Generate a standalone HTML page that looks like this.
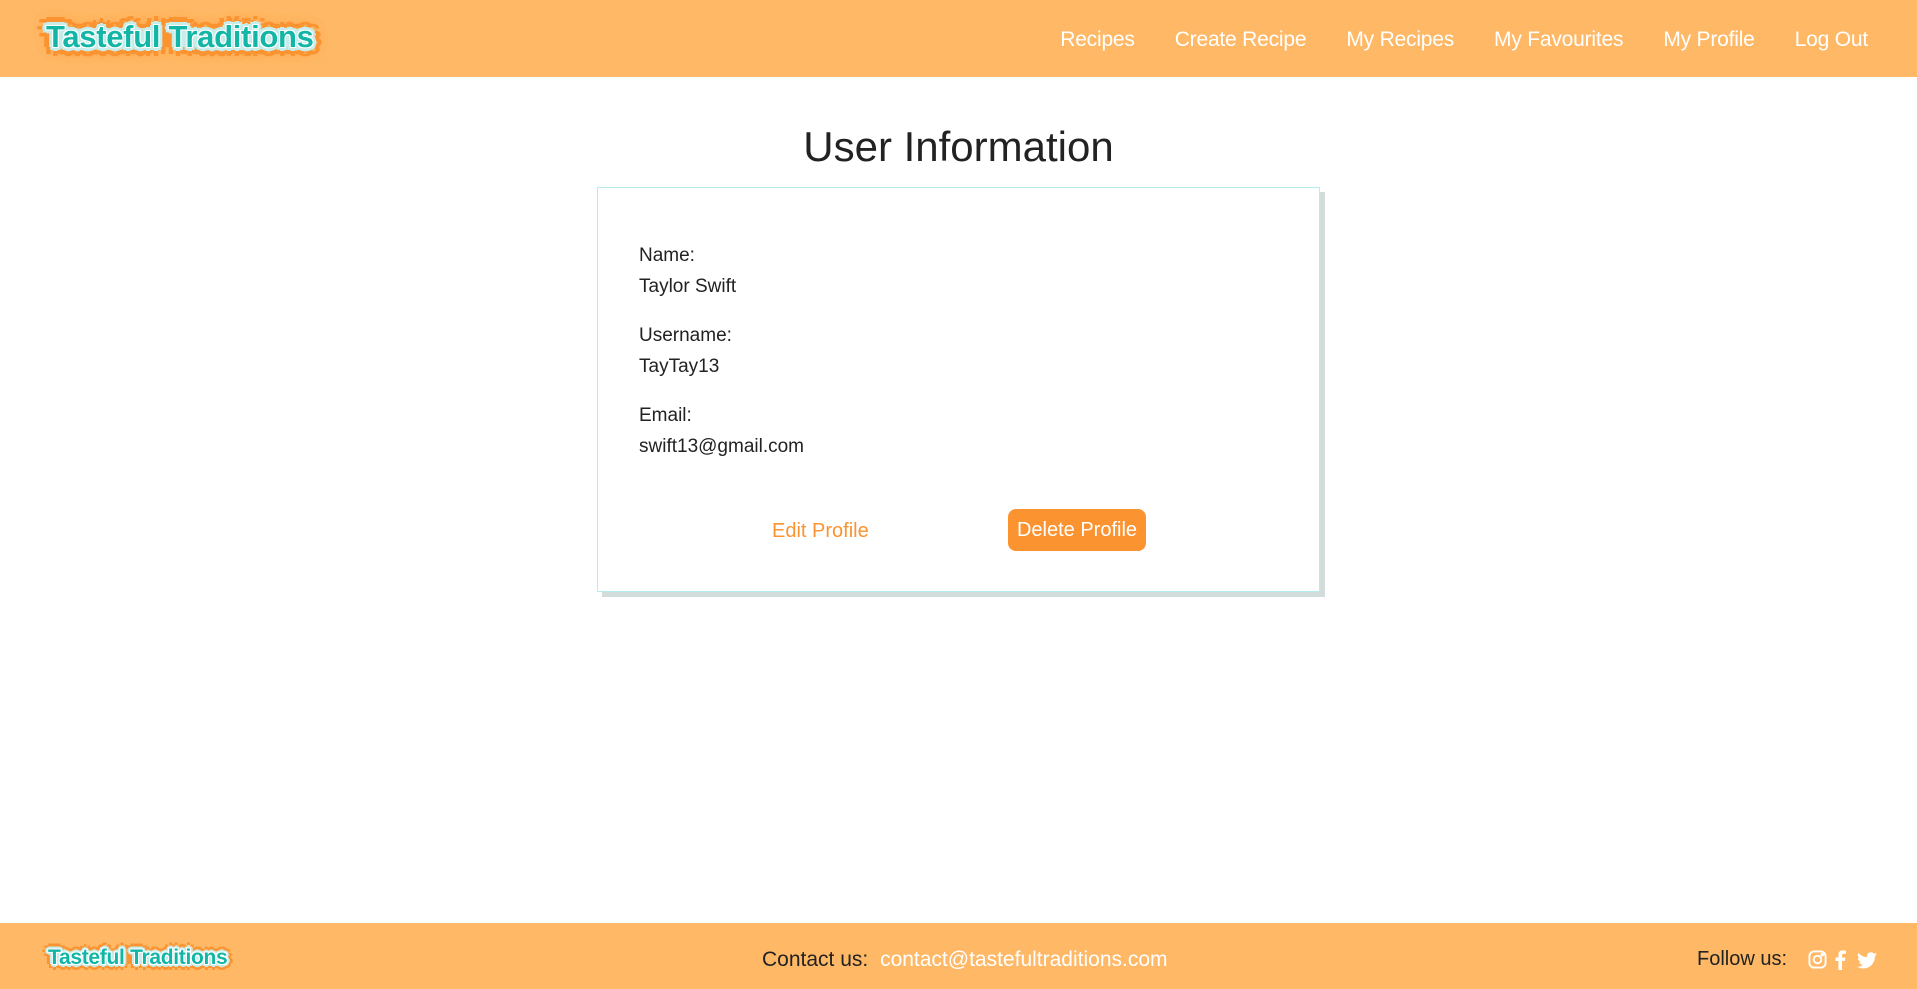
<!DOCTYPE html>
<html><head><meta charset="utf-8"><style>
*{margin:0;padding:0;box-sizing:border-box}
body{width:1917px;height:989px;position:relative;background:#fff;font-family:"Liberation Sans",sans-serif;color:#222;overflow:hidden}
header{position:absolute;left:0;top:0;width:1917px;height:77px;background:#ffb866}
.logo{position:absolute;font-weight:bold;color:#13b6a6;white-space:nowrap}
.logo.big{left:46px;top:19px;font-size:31px;letter-spacing:-0.3px;
text-shadow:1px 1px 0 #fff,-1px -1px 0 #fff,1px -1px 0 #fff,-1px 1px 0 #fff,
4px 0 0 #c8ecea,-4px 0 0 #c8ecea,0 4px 0 #c8ecea,0 -4px 0 #c8ecea,3px 3px 0 #c8ecea,-3px -3px 0 #c8ecea,3px -3px 0 #c8ecea,-3px 3px 0 #c8ecea,
9px 0 0 #fb9330,-9px 0 0 #fb9330,0 9px 0 #fb9330,0 -9px 0 #fb9330,7px 7px 0 #fb9330,-7px -7px 0 #fb9330,7px -7px 0 #fb9330,-7px 7px 0 #fb9330,0 0 16px #fb9330,0 0 16px #fb9330}
.logo.small{left:48px;top:946px;font-size:21px;letter-spacing:-0.3px;
text-shadow:1px 1px 0 #fff,-1px -1px 0 #fff,1px -1px 0 #fff,-1px 1px 0 #fff,
3px 0 0 #c8ecea,-3px 0 0 #c8ecea,0 3px 0 #c8ecea,0 -3px 0 #c8ecea,2px 2px 0 #c8ecea,-2px -2px 0 #c8ecea,2px -2px 0 #c8ecea,-2px 2px 0 #c8ecea,
6px 0 0 #fb9330,-6px 0 0 #fb9330,0 6px 0 #fb9330,0 -6px 0 #fb9330,4px 4px 0 #fb9330,-4px -4px 0 #fb9330,4px -4px 0 #fb9330,-4px 4px 0 #fb9330}
nav{position:absolute;right:49px;top:28px;display:flex;gap:40px;font-size:21px;color:#fff;letter-spacing:-0.2px}
h1{position:absolute;top:123px;width:1917px;text-align:center;font-weight:normal;font-size:42px;color:#222}
.card{position:absolute;left:597px;top:187px;width:723px;height:405px;border:1.5px solid #b5ecec;background:#fff;box-shadow:5px 5px 0 #d2dcdb}
.f{position:absolute;left:41px;font-size:19px;line-height:31px}
.edit{position:absolute;left:174px;top:332px;font-size:20px;color:#fb9330}
.del{position:absolute;left:410px;top:321px;width:138px;height:42px;background:#fb9330;border-radius:8px;color:#fff;font-size:20px;text-align:center;line-height:42px}
footer{position:absolute;left:0;top:923px;width:1917px;height:66px;background:#ffb866}
.contact{position:absolute;top:948px;left:762px;font-size:21px;color:#222}
.contact span{color:#fff;margin-left:6px}
.follow{position:absolute;top:948px;left:1697px;font-size:20px;color:#222}
.ic{position:absolute;top:950px}
</style></head><body>
<header>
<div class="logo big">Tasteful Traditions</div>
<nav><span>Recipes</span><span>Create Recipe</span><span>My Recipes</span><span>My Favourites</span><span>My Profile</span><span>Log Out</span></nav>
</header>
<h1>User Information</h1>
<div class="card">
<div class="f" style="top:52px">Name:<br>Taylor Swift</div>
<div class="f" style="top:132px">Username:<br>TayTay13</div>
<div class="f" style="top:212px">Email:<br>swift13@gmail.com</div>
<div class="edit">Edit Profile</div>
<div class="del">Delete Profile</div>
</div>
<footer></footer>
<div class="logo small">Tasteful Traditions</div>
<div class="contact">Contact us: <span>contact@tastefultraditions.com</span></div>
<div class="follow">Follow us:</div>
<svg class="ic" style="left:1808px" width="19" height="19" viewBox="0 0 20 20" fill="none" stroke="#fff" stroke-width="2"><rect x="1.5" y="1.5" width="17" height="17" rx="5"/><circle cx="10" cy="10" r="4"/><circle cx="15" cy="5" r="0.8" fill="#fff"/></svg>
<svg class="ic" style="left:1834px" width="12" height="20" viewBox="0 0 12 20"><path d="M8 20V11h3l.5-3.5H8V5.5c0-1 .3-1.7 1.8-1.7H12V.6C11.5.5 10.3.4 9 .4 6.2.4 4.4 2 4.4 5v2.5H1.5V11h2.9v9z" fill="#fff"/></svg>
<svg class="ic" style="left:1857px;top:952px" width="20" height="17" viewBox="0 0 24 20"><path d="M24 2.4c-.9.4-1.8.6-2.8.8 1-.6 1.8-1.6 2.2-2.7-1 .6-2 1-3.1 1.2A4.9 4.9 0 0 0 11.9 6C7.8 5.8 4.2 3.9 1.7.9c-1.3 2.3-.6 5.1 1.5 6.6-.8 0-1.6-.2-2.200-.6 0 2.4 1.7 4.4 3.9 4.9-.7.2-1.5.2-2.2.1.6 2 2.4 3.4 4.6 3.4A9.9 9.9 0 0 1 0 17.3 14 14 0 0 0 7.5 19.5c9.1 0 14.3-7.7 14-14.6 1-.7 1.8-1.6 2.5-2.5z" fill="#fff"/></svg>
</body></html>
